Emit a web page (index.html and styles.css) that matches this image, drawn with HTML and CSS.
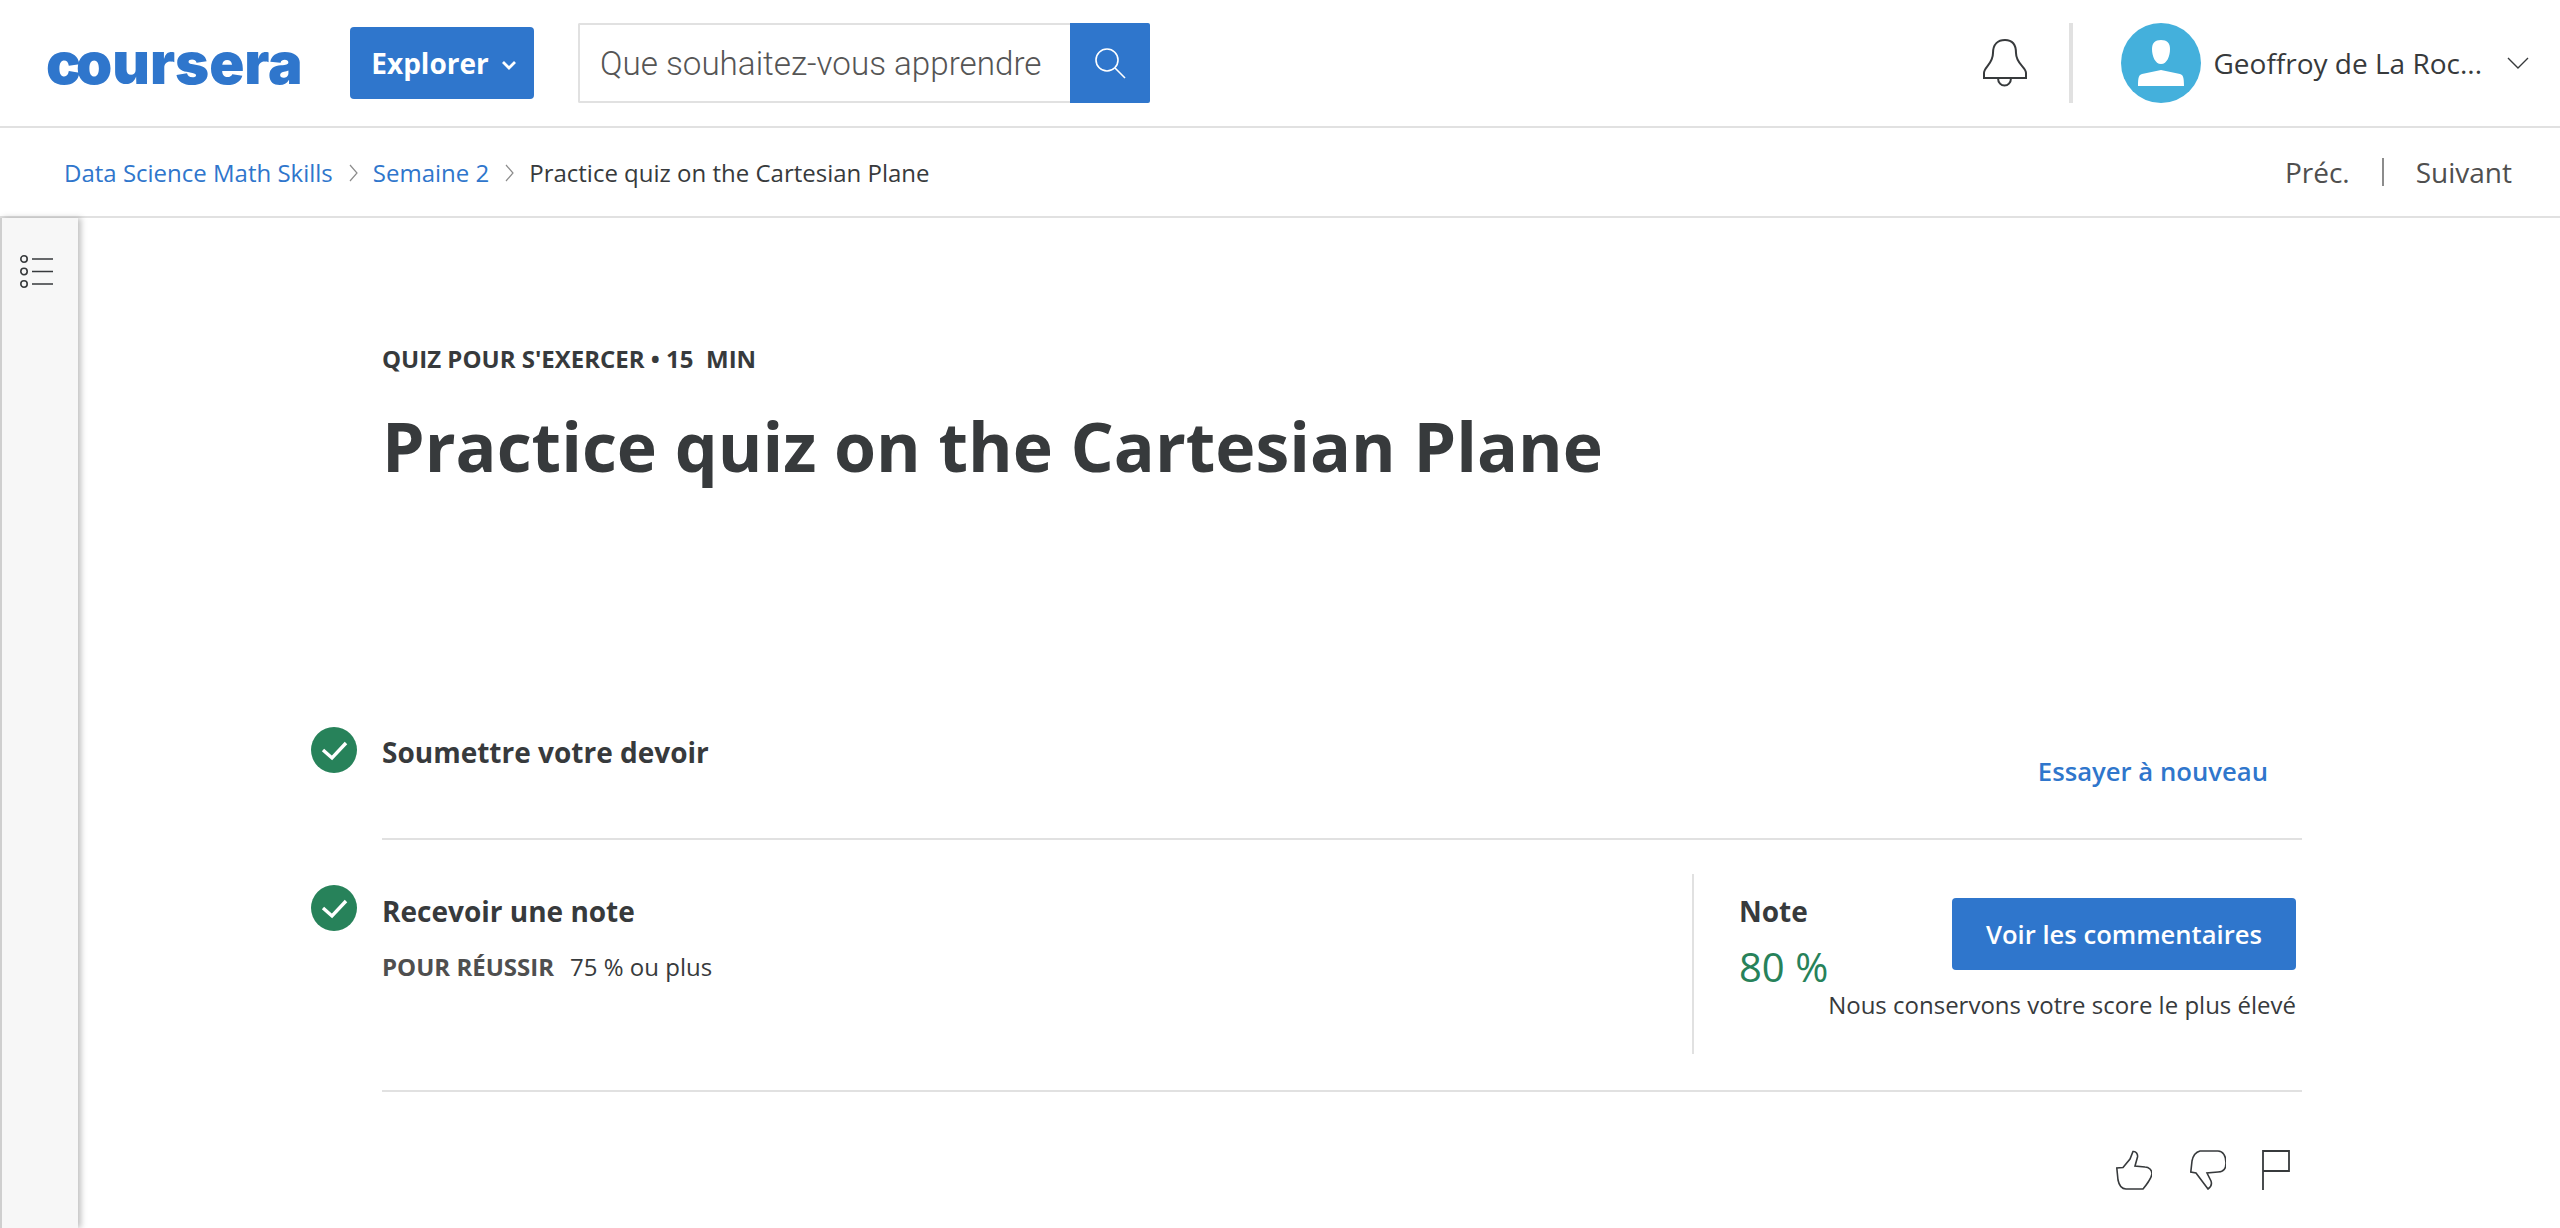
FILE: index.html
```html
<!DOCTYPE html>
<html lang="fr">
<head>
  <meta charset="UTF-8" />
  <title>Practice quiz on the Cartesian Plane</title>
  <link rel="stylesheet" href="styles.css">
</head>
<body>
  <header class="topbar">
    <div class="logo"><span class="logo-c">c</span>oursera</div>
    <button class="explore">Explorer
      <svg class="explore-arrow" width="16" height="11" viewBox="0 0 16 11"><path d="M2 2l6 6 6-6" fill="none" stroke="#fff" stroke-width="2.8"/></svg>
    </button>
    <form class="search">
      <input class="search-input" type="text" placeholder="Que souhaitez-vous apprendre">
      <div class="search-btn">
        <svg width="32" height="32" viewBox="0 0 32 32"><circle cx="13" cy="13" r="11" fill="none" stroke="#fff" stroke-width="1.6"/><path d="M21 21l10 10" stroke="#fff" stroke-width="1.6"/></svg>
      </div>
    </form>
    <div class="user-area">
      <svg class="bell" width="44" height="48" viewBox="0 0 44 48"><path d="M1 39v-5c0-6 9-9 9-20C10 5 15 1 22 1s11 4 11 13c0 11 10 14 10 20v5zM15 39c0 10 13 10 13 0" fill="none" stroke="#373a3c" stroke-width="2"/></svg>
      <div class="user-sep"></div>
      <svg class="avatar" width="80" height="80" viewBox="0 0 80 80"><circle cx="40" cy="40" r="40" fill="#44b0dc"/><path d="M40 17c6 0 9 3 9 9 0 7-3 15-9 15s-9-8-9-15c0-6 3-9 9-9zM40 47l19 4c3 1 4 3 4 12H17c0-9 1-11 4-12z" fill="#fff"/></svg>
      <span class="user-name">Geoffroy de La Roc...</span>
      <svg class="user-arrow" width="22" height="12" viewBox="0 0 22 12"><path d="M1 1l10 10L21 1" fill="none" stroke="#373a3c" stroke-width="1.4"/></svg>
    </div>
  </header>

  <nav class="crumbs">
    <a class="crumb-link">Data Science Math Skills</a>
    <svg class="crumb-sep" width="10" height="18" viewBox="0 0 10 18"><path d="M1 1l7 8-7 8" fill="none" stroke="#8c8c8c" stroke-width="1.2"/></svg>
    <a class="crumb-link">Semaine 2</a>
    <svg class="crumb-sep" width="10" height="18" viewBox="0 0 10 18"><path d="M1 1l7 8-7 8" fill="none" stroke="#8c8c8c" stroke-width="1.2"/></svg>
    <span class="crumb-current">Practice quiz on the Cartesian Plane</span>
    <div class="pager">
      <span>Préc.</span>
      <i class="pager-sep"></i>
      <span>Suivant</span>
    </div>
  </nav>

  <div class="layout">
    <aside class="sidebar">
      <svg width="34" height="36" viewBox="0 0 34 36"><g fill="none" stroke="#373a3c" stroke-width="1.6"><circle cx="4" cy="5" r="3.2"/><circle cx="4" cy="17.5" r="3.2"/><circle cx="4" cy="30" r="3.2"/><path d="M12 5h21M12 17.5h21M12 30h21"/></g></svg>
    </aside>

    <main class="content">
      <div class="eyebrow">QUIZ POUR S'EXERCER • 15&nbsp; MIN</div>
      <h1 class="quiz-title">Practice quiz on the Cartesian Plane</h1>

      <section class="step step-submit">
        <svg class="check" width="46" height="46" viewBox="0 0 46 46"><circle cx="23" cy="23" r="23" fill="#27825a"/><path d="M12 23l9 8 14-15" fill="none" stroke="#fff" stroke-width="3.4"/></svg>
        <div class="step-body submit-body">
          <div class="step-title">Soumettre votre devoir</div>
          <a class="retry">Essayer à nouveau</a>
        </div>
      </section>

      <section class="step step-grade">
        <svg class="check" width="46" height="46" viewBox="0 0 46 46"><circle cx="23" cy="23" r="23" fill="#27825a"/><path d="M12 23l9 8 14-15" fill="none" stroke="#fff" stroke-width="3.4"/></svg>
        <div class="step-body grade-body">
          <div class="grade-left">
            <div class="step-title">Recevoir une note</div>
            <div class="pass-line"><b>POUR RÉUSSIR</b><span>75 % ou plus</span></div>
          </div>
          <div class="grade-right">
            <div class="grade-score">
              <div class="step-title">Note</div>
              <div class="score">80 %</div>
            </div>
            <div class="grade-action">
              <button class="feedback">Voir les commentaires</button>
              <div class="keep-note">Nous conservons votre score le plus élevé</div>
            </div>
          </div>
        </div>
      </section>

      <div class="actions">
        <svg width="36" height="40" viewBox="0 0 36 40"><path d="M10 39C5 39 3 35 2 30L.8 18 7 17.5 14 9l3-7.500C20 1 22 4 21.500 7L19 16l10 1c4 0 7 3 7 7-1 5-4 9-9 15z" fill="none" stroke="#373a3c" stroke-width="1.6"/></svg>
        <svg width="36" height="40" viewBox="0 0 36 40"><path d="M10 1h18c5 0 8 5 8 12 0 6-3 9-8 9l-11 1 4 8c1 3 0 6-3 8L6 23 .8 22 2 11C3 6 6 2 10 1z" fill="none" stroke="#373a3c" stroke-width="1.6"/></svg>
        <svg width="28" height="40" viewBox="0 0 28 40"><path d="M1 40V1h26v20H1" fill="none" stroke="#373a3c" stroke-width="1.8"/></svg>
      </div>
    </main>
  </div>
</body>
</html>
```

FILE: styles.css
```css
* {
  box-sizing: border-box;
}
html, body {
  margin: 0;
  height: 1228px;
  overflow: hidden;
}
body {
  font-family: "Open Sans", sans-serif;
  color: #373a3c;
  background: #fff;
}

/* top bar */
.topbar {
  display: flex;
  align-items: center;
  height: 128px;
  padding-left: 46px;
  border-bottom: 2px solid #e1e1e1;
}
.logo {
  width: 256px;
  margin-right: 48px;
  font-family: Inter, sans-serif;
  font-weight: 900;
  font-size: 58px;
  line-height: 60px;
  letter-spacing: 0;
  color: #2f76cc;
  white-space: nowrap;
}
.logo-c {
  letter-spacing: -5px;
}
.explore {
  display: flex;
  align-items: center;
  justify-content: center;
  gap: 12px;
  width: 184px;
  height: 72px;
  margin-right: 44px;
  padding: 0 0 0 4px;
  border: none;
  border-radius: 4px;
  background: #2f76cc;
  color: #fff;
  font: 700 28px "Open Sans", sans-serif;
}
.explore-arrow {
  margin-top: 4px;
}
.search {
  display: flex;
  width: 572px;
  height: 80px;
  margin: 0;
}
.search-input {
  width: 492px;
  padding: 0 0 0 20px;
  border: 2px solid #e1e1e1;
  border-right: none;
  border-radius: 2px 0 0 2px;
  font: 300 33.2px Roboto, sans-serif;
  outline: none;
}
.search-input::placeholder {
  color: #555;
  opacity: 1;
}
.search-btn {
  display: flex;
  align-items: center;
  justify-content: center;
  width: 80px;
  background: #2f76cc;
  border-radius: 0 2px 2px 0;
}
.user-area {
  display: flex;
  align-items: center;
  margin-left: auto;
  padding-right: 31px;
}
.bell {
  margin-right: 42px;
}
.user-sep {
  width: 4px;
  height: 80px;
  margin-right: 48px;
  background: #e1e1e1;
}
.user-name {
  margin-left: 12px;
  margin-right: 25px;
  font-size: 28px;
}

/* breadcrumb */
.crumbs {
  display: flex;
  align-items: center;
  height: 90px;
  padding: 0 48px 0 64px;
  border-bottom: 2px solid #e1e1e1;
  font-size: 24px;
}
.crumb-link {
  color: #2f76cc;
}
.crumb-sep {
  margin: 2px 14px 0 16px;
}
.pager {
  display: flex;
  align-items: center;
  margin-left: auto;
  font-size: 28px;
  color: #4f4f4f;
}
.pager-sep {
  width: 2px;
  height: 28px;
  margin: 0 32px;
  background: #8c8c8c;
}

/* body */
.layout {
  display: flex;
  height: 1010px;
}
.sidebar {
  flex: none;
  width: 78px;
  padding: 36px 0 0 18px;
  border-left: 2px solid #cfcfcf;
  background: #f7f7f7;
  box-shadow: 3px 0 6px rgba(0, 0, 0, 0.25);
}
.content {
  flex: 1;
  padding: 125px 258px 0 304px;
}
.eyebrow {
  font-size: 24px;
  font-weight: 700;
  line-height: 32px;
}
.quiz-title {
  margin: 29px 0 239px;
  font-size: 68px;
  font-weight: 700;
  line-height: 84px;
}
.step {
  display: flex;
  gap: 25px;
  margin-left: -71px;
}
.check {
  flex: none;
}
.step-grade .check {
  margin-top: 45px;
}
.step-body {
  flex: 1;
  display: flex;
  justify-content: space-between;
  border-bottom: 2px solid #e1e1e1;
}
.step-title {
  font-size: 28px;
  font-weight: 700;
  line-height: 36px;
}
.submit-body {
  height: 113px;
  padding: 7px 34px 0 0;
}
.retry {
  margin-top: 20px;
  font-size: 25.7px;
  font-weight: 600;
  line-height: 36px;
  color: #2f76cc;
}
.grade-body {
  padding: 34px 0 36px;
}
.grade-left {
  padding-top: 19px;
}
.pass-line {
  margin-top: 22px;
  font-size: 24px;
  line-height: 32px;
}
.pass-line b {
  margin-right: 16px;
  font-weight: 700;
  color: #4f4f4f;
}
.grade-right {
  display: flex;
  justify-content: space-between;
  width: 610px;
  height: 180px;
  padding: 19px 6px 0 45px;
  border-left: 2px solid #e1e1e1;
}
.score {
  margin-top: 12px;
  font-size: 40px;
  line-height: 52px;
  color: #27825a;
}
.grade-action {
  display: flex;
  flex-direction: column;
  align-items: flex-end;
  width: 344px;
  padding-top: 5px;
}
.feedback {
  width: 344px;
  height: 72px;
  border: none;
  border-radius: 4px;
  background: #2f76cc;
  color: #fff;
  font: 600 25.6px "Open Sans", sans-serif;
}
.keep-note {
  margin-top: 19px;
  font-size: 24px;
  line-height: 32px;
  white-space: nowrap;
}
.actions {
  display: flex;
  justify-content: flex-end;
  gap: 38px;
  margin: 58px 12px 0 0;
}
.actions svg:last-child {
  margin-left: -2px;
}
```
